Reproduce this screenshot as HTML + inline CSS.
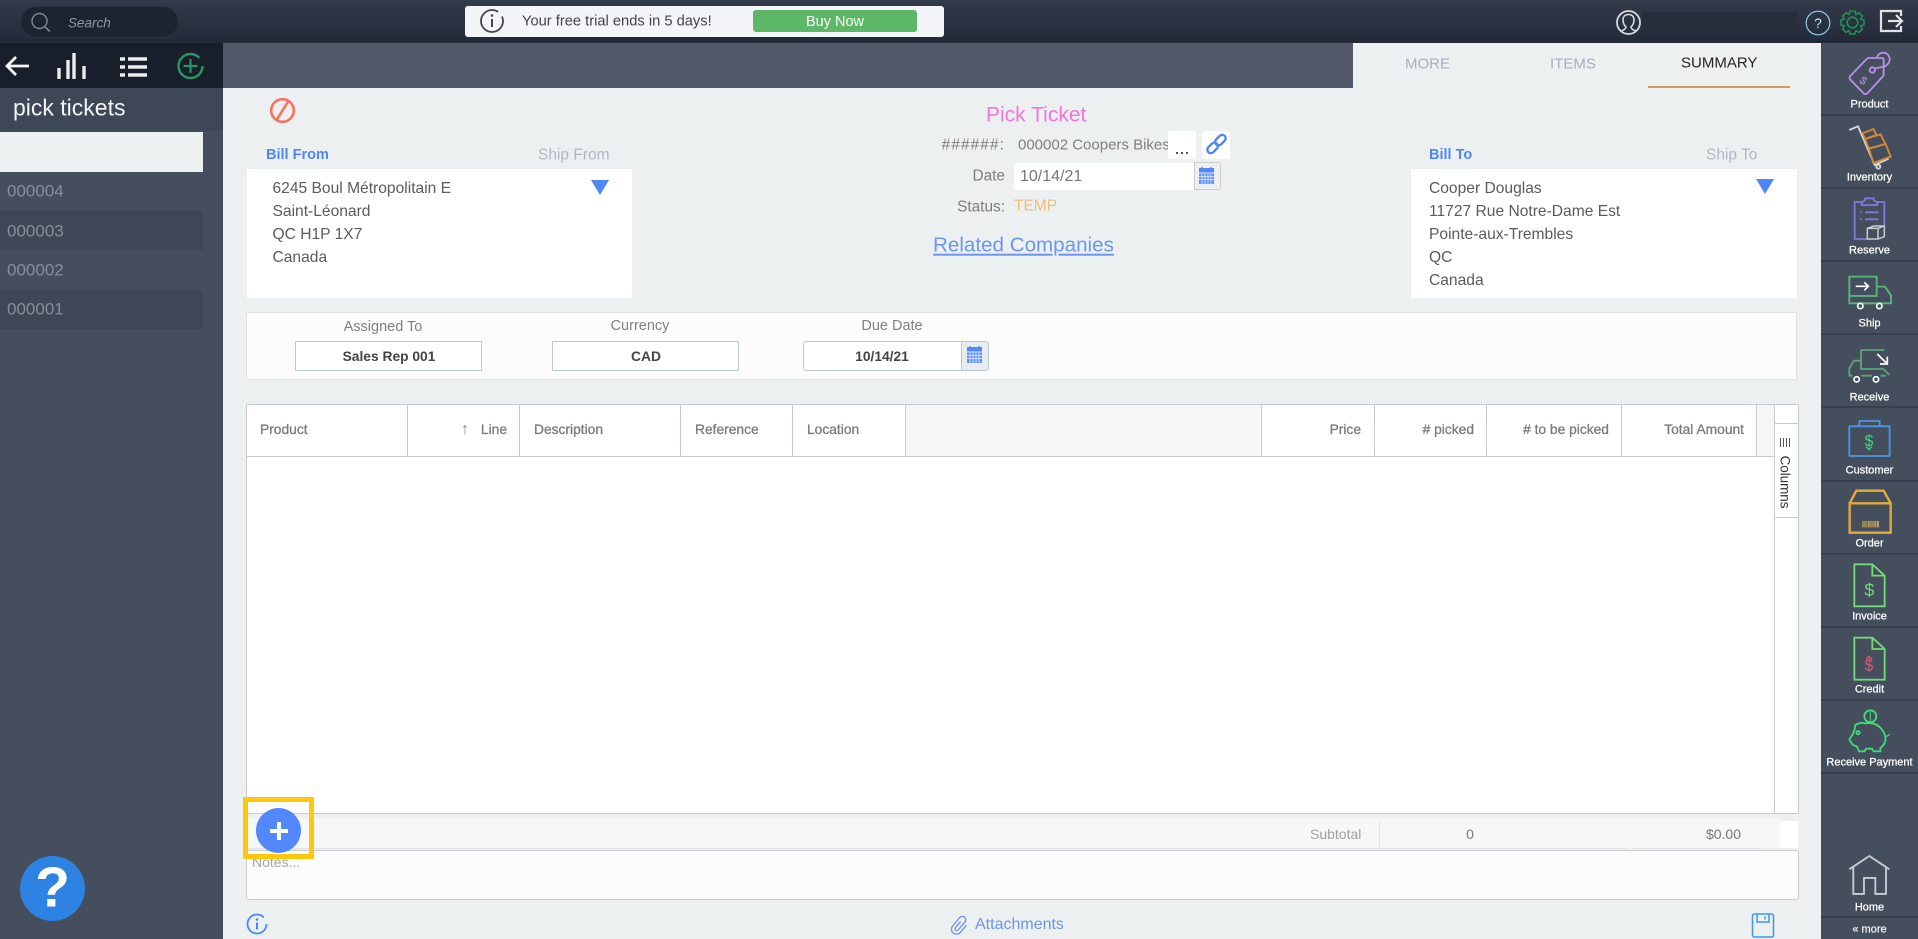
<!DOCTYPE html>
<html><head><meta charset="utf-8"><title>Pick Tickets</title>
<style>
html,body{margin:0;padding:0;width:1918px;height:939px;overflow:hidden;background:#edf0f1;font-family:"Liberation Sans",sans-serif}
.b{position:absolute}
.t{position:absolute;white-space:nowrap;line-height:1;transform:translateY(-50%)}
.c{position:absolute;white-space:nowrap;line-height:1;transform:translate(-50%,-50%)}
.r{position:absolute;white-space:nowrap;line-height:1;transform:translate(-100%,-50%)}
.addr{font-size:15.6px;color:#5b5b5b}
.lab{font-size:15.4px;color:#7d7d7d}
.th{font-size:13.8px;color:#7a7a7a;-webkit-text-stroke:.3px #7a7a7a}
.v{position:absolute;width:1px;background:#c6cbcf;top:405px;height:51px}
.side{font-size:11px;color:#fff;-webkit-text-stroke:.25px #fff}
.bx{position:absolute;box-sizing:border-box;background:#fff;border:1px solid #bcc8d0;top:341px;height:30px}
.bt{font-size:13.8px;color:#444;font-weight:bold}
.dv{position:absolute;left:1821px;width:97px;height:2px;background:#373f4c}
</style></head><body>

<div class="b" style="left:0;top:0;width:1918px;height:43px;background:linear-gradient(#333a4a,#222937)"></div>
<div class="b" style="left:20px;top:6px;width:159px;height:32px;box-sizing:border-box;border-radius:16px;background:#1c2432;border:1px solid #2c3442"></div>
<span class="t" style="left:68px;top:23px;font-size:13.5px;font-style:italic;color:#8d96a3">Search</span>

<div class="b" style="left:465px;top:6px;width:479px;height:31px;background:#f3f5f9;border-radius:3px"></div>
<span class="t" style="left:522px;top:22px;font-size:14.7px;color:#444">Your free trial ends in 5 days!</span>
<div class="b" style="left:753px;top:10px;width:164px;height:22px;background:#5cb767;border-radius:3px"></div>
<span class="c" style="left:835px;top:22px;font-size:14.5px;color:#fff">Buy Now</span>
<div class="b" style="left:1642px;top:12px;width:155px;height:22px;background:#262d3b"></div>

<div class="b" style="left:223px;top:43px;width:1130px;height:45px;background:#525868"></div>
<div class="b" style="left:0;top:43px;width:223px;height:896px;background:#454e5c"></div>
<div class="b" style="left:0;top:43px;width:223px;height:45px;background:#181f2b"></div>
<div class="b" style="left:0;top:88px;width:223px;height:43px;background:#3e4755"></div>
<span class="t" style="left:13px;top:108px;font-size:23px;color:#f2f4f5">pick tickets</span>
<div class="b" style="left:0;top:132px;width:203px;height:40px;background:#edf0f1"></div>
<div class="b" style="left:0;top:211px;width:203px;height:39px;background:#3e4755"></div>
<div class="b" style="left:0;top:290px;width:203px;height:39px;background:#3e4755"></div>
<span class="t" style="left:7px;top:191px;font-size:17px;color:#868e9a">000004</span>
<span class="t" style="left:7px;top:231px;font-size:17px;color:#868e9a">000003</span>
<span class="t" style="left:7px;top:270px;font-size:17px;color:#868e9a">000002</span>
<span class="t" style="left:7px;top:309px;font-size:17px;color:#868e9a">000001</span>

<div class="b" style="left:20px;top:856px;width:65px;height:65px;border-radius:50%;background:#2d82e2"></div>
<span class="c" style="left:52.5px;top:888px;font-size:57px;font-weight:bold;color:#fff">?</span>

<!-- tabs -->
<span class="t" style="left:1405px;top:64px;font-size:15px;color:#a7afc0">MORE</span>
<span class="t" style="left:1550px;top:64px;font-size:15px;color:#a7afc0">ITEMS</span>
<span class="t" style="left:1681px;top:63px;font-size:15px;color:#222">SUMMARY</span>
<div class="b" style="left:1648px;top:86px;width:142px;height:2px;background:#d39b57"></div>

<!-- bill from -->
<span class="t" style="left:266px;top:155px;font-size:14.5px;font-weight:bold;color:#4f86fb">Bill From</span>
<span class="t" style="left:538px;top:155px;font-size:15.5px;color:#b0b6c6">Ship From</span>
<div class="b" style="left:247px;top:169px;width:385px;height:129px;background:#fff"></div>
<span class="t addr" style="left:272.5px;top:188.500px">6245 Boul Métropolitain E</span>
<span class="t addr" style="left:272.5px;top:211.500px">Saint-Léonard</span>
<span class="t addr" style="left:272.5px;top:234.500px">QC H1P 1X7</span>
<span class="t addr" style="left:272.5px;top:257.500px">Canada</span>

<!-- middle -->
<span class="t" style="left:986px;top:115px;font-size:21px;color:#f075dc">Pick Ticket</span>
<span class="r lab" style="left:1005px;top:145px;letter-spacing:1.1px">######:</span>
<div class="b" style="left:1018px;top:134px;width:150px;height:24px;overflow:hidden"><span class="t" style="left:0;top:11px;font-size:15px;color:#808080">000002 Coopers Bikes</span></div>
<div class="b" style="left:1168px;top:131px;width:28px;height:28px;background:#fff;border-radius:3px"></div>
<span class="c" style="left:1182px;top:148px;font-size:18px;color:#333">...</span>
<div class="b" style="left:1202px;top:131px;width:28px;height:28px;background:#fff;border-radius:3px"></div>
<span class="r lab" style="left:1005px;top:176px">Date</span>
<div class="b" style="left:1014px;top:163px;width:180px;height:27px;background:#fff;border-radius:3px 0 0 3px"></div>
<span class="t" style="left:1020px;top:177px;font-size:16px;color:#777">10/14/21</span>
<div class="b" style="left:1194px;top:162px;width:27px;height:28px;box-sizing:border-box;background:#eceff1;border:1px solid #ccc;border-radius:0 3px 3px 0"></div>
<span class="r lab" style="left:1005px;top:207px">Status:</span>
<span class="t" style="left:1014px;top:206px;font-size:15.5px;color:#eabf7b">TEMP</span>
<span class="t" style="left:933px;top:246px;font-size:20.6px;color:#6d96ee;text-decoration:underline">Related Companies</span>

<!-- bill to -->
<span class="t" style="left:1429px;top:155px;font-size:14.5px;font-weight:bold;color:#4f86fb">Bill To</span>
<span class="t" style="left:1706px;top:155px;font-size:15.5px;color:#b0b6c6">Ship To</span>
<div class="b" style="left:1411px;top:169px;width:386px;height:129px;background:#fff"></div>
<span class="t addr" style="left:1429px;top:188.500px">Cooper Douglas</span>
<span class="t addr" style="left:1429px;top:211.500px">11727 Rue Notre-Dame Est</span>
<span class="t addr" style="left:1429px;top:234.500px">Pointe-aux-Trembles</span>
<span class="t addr" style="left:1429px;top:257.500px">QC</span>
<span class="t addr" style="left:1429px;top:280.500px">Canada</span>

<!-- assign panel -->
<div class="b" style="left:246px;top:312px;width:1551px;height:68px;box-sizing:border-box;background:#fcfcfc;border:1px solid #dde1e5;border-radius:2px"></div>
<span class="c" style="left:383px;top:327px;font-size:14.5px;color:#808080">Assigned To</span>
<span class="c" style="left:640px;top:326px;font-size:14.5px;color:#808080">Currency</span>
<span class="c" style="left:892px;top:326px;font-size:14.5px;color:#808080">Due Date</span>
<div class="bx" style="left:295px;width:187px"></div>
<span class="c bt" style="left:389px;top:357px">Sales Rep 001</span>
<div class="bx" style="left:552px;width:187px"></div>
<span class="c bt" style="left:646px;top:357px">CAD</span>
<div class="bx" style="left:803px;width:159px;border-radius:3px 0 0 3px"></div>
<span class="c bt" style="left:882px;top:357px">10/14/21</span>
<div class="bx" style="left:961px;width:28px;background:#e9ecef;border-radius:0 3px 3px 0"></div>

<!-- table -->
<div class="b" style="left:246px;top:404px;width:1553px;height:410px;box-sizing:border-box;background:#fff;border:1px solid #c6cbcf;border-radius:2px"></div>
<div class="b" style="left:905px;top:405px;width:356px;height:51px;background:#f5f7f7"></div>
<div class="b" style="left:1756px;top:405px;width:18px;height:51px;background:#f5f7f7"></div>
<div class="b" style="left:247px;top:456px;width:1527px;height:1px;background:#c6cbcf"></div>
<div class="v" style="left:407px"></div><div class="v" style="left:519px"></div><div class="v" style="left:680px"></div><div class="v" style="left:792px"></div><div class="v" style="left:905px"></div><div class="v" style="left:1261px"></div><div class="v" style="left:1374px"></div><div class="v" style="left:1486px"></div><div class="v" style="left:1621px"></div><div class="v" style="left:1756px"></div>
<div class="b" style="left:1774px;top:405px;width:1px;height:408px;background:#c6cbcf"></div>
<div class="b" style="left:1774px;top:423px;width:24px;height:1px;background:#c6cbcf"></div>
<div class="b" style="left:1774px;top:517px;width:24px;height:1px;background:#c6cbcf"></div>
<span class="t th" style="left:260px;top:430px">Product</span>
<span class="t" style="left:461px;top:430px;font-size:16px;color:#888">↑</span>
<span class="r th" style="left:507px;top:430px">Line</span>
<span class="t th" style="left:534px;top:430px">Description</span>
<span class="t th" style="left:695px;top:430px">Reference</span>
<span class="t th" style="left:807px;top:430px">Location</span>
<span class="r th" style="left:1361px;top:430px">Price</span>
<span class="r th" style="left:1474px;top:430px"># picked</span>
<span class="r th" style="left:1609px;top:430px"># to be picked</span>
<span class="r th" style="left:1744px;top:430px">Total Amount</span>
<span class="c" style="left:1785px;top:482px;font-size:13.4px;color:#333;transform:translate(-50%,-50%) rotate(90deg)">Columns</span>
<div class="b" style="left:1780px;top:438px;width:12px;height:9px;background:repeating-linear-gradient(90deg,#555 0 1px,transparent 1px 3px)"></div>

<!-- footer -->
<div class="b" style="left:246px;top:818px;width:1534px;height:30px;background:#f6f7f9"></div>
<div class="b" style="left:1780px;top:821px;width:18px;height:27px;background:#fff"></div>
<div class="b" style="left:246px;top:848px;width:1133px;height:1px;background:#dfe2e6"></div>
<div class="b" style="left:1379px;top:822px;width:1px;height:26px;background:#dfe2e6"></div>
<div class="b" style="left:1379px;top:848px;width:248px;height:1px;background:#dfe2e6"></div>
<div class="b" style="left:1633px;top:848px;width:126px;height:1px;background:#dfe2e6"></div>
<span class="t" style="left:1310px;top:834px;font-size:14px;color:#a0a0a0">Subtotal</span>
<span class="c" style="left:1470px;top:834px;font-size:14px;color:#777">0</span>
<span class="r" style="left:1741px;top:834px;font-size:14px;color:#777">$0.00</span>
<div class="b" style="left:246px;top:850px;width:1553px;height:50px;box-sizing:border-box;background:#fcfcfc;border:1px solid #ccc;border-radius:3px"></div>
<span class="t" style="left:252px;top:862px;font-size:14px;color:#a5a5a5">Notes...</span>
<span class="t" style="left:975px;top:925px;font-size:16px;color:#6b95f0">Attachments</span>

<!-- highlight -->
<div class="b" style="left:243px;top:797px;width:71px;height:62px;box-sizing:border-box;border:5px solid #fdc70c"></div>
<div class="b" style="left:256px;top:808px;width:45px;height:45px;border-radius:50%;background:#5288fb"></div>
<div class="b" style="left:269.5px;top:828.500px;width:18px;height:4px;background:#fff"></div>
<div class="b" style="left:276.500px;top:821.5px;width:4px;height:18px;background:#fff"></div>

<!-- right sidebar -->
<div class="b" style="left:1821px;top:43px;width:97px;height:896px;background:#454e5c"></div>
<div class="dv" style="top:114px"></div><div class="dv" style="top:187px"></div><div class="dv" style="top:260px"></div><div class="dv" style="top:333px"></div><div class="dv" style="top:406px"></div><div class="dv" style="top:480px"></div><div class="dv" style="top:553px"></div><div class="dv" style="top:626px"></div><div class="dv" style="top:699px"></div><div class="dv" style="top:772px"></div><div class="dv" style="top:916px"></div>
<span class="c side" style="left:1869.5px;top:105px">Product</span>
<span class="c side" style="left:1869.5px;top:178px">Inventory</span>
<span class="c side" style="left:1869.5px;top:251px">Reserve</span>
<span class="c side" style="left:1869.5px;top:324px">Ship</span>
<span class="c side" style="left:1869.5px;top:398px">Receive</span>
<span class="c side" style="left:1869.5px;top:471px">Customer</span>
<span class="c side" style="left:1869.5px;top:544px">Order</span>
<span class="c side" style="left:1869.5px;top:617px">Invoice</span>
<span class="c side" style="left:1869.5px;top:690px">Credit</span>
<span class="c side" style="left:1869.5px;top:763px">Receive Payment</span>
<span class="c side" style="left:1869.5px;top:908px">Home</span>
<span class="c side" style="left:1869.5px;top:930px;color:#e8e8e8">« more</span>

<svg class="b" style="left:0;top:0" width="1918" height="939" viewBox="0 0 1918 939" fill="none">
<!-- search -->
<circle cx="39.5" cy="21" r="7.5" stroke="#7e8795" stroke-width="1.4"/><path d="M45 27l5 4.500" stroke="#7e8795" stroke-width="1.6"/>
<!-- banner info -->
<circle cx="492" cy="21" r="11" stroke="#444" stroke-width="1.8" stroke-dasharray="58 6"/><circle cx="492" cy="15.5" r="1.3" fill="#444"/><path d="M492 19v8" stroke="#444" stroke-width="2"/>
<!-- top right -->
<circle cx="1628.5" cy="22.5" r="11.5" stroke="#d8dadd" stroke-width="1.8"/>
<path d="M1621 31c3-1 5-2 5-4-2-2-3-5-3-7 0-3.5 2.300-5.500 5.500-5.500s5.500 2 5.500 5.500c0 2-1 5-3 7 0 2 2 3 5 4" stroke="#d8dadd" stroke-width="1.6"/>
<circle cx="1818" cy="23" r="11.800" stroke="#8fcdf0" stroke-width="1.200"/>
<text x="1818" y="28" text-anchor="middle" font-size="14" font-family="Liberation Sans" fill="#cfe4f2">?</text>
<g transform="translate(1852.500,22.500)" stroke="#1d9350" stroke-width="1.600"><circle r="5.300"/><path d="M-2.400-11.500H2.400L3.400-8.100 6.430-9.830 9.830-6.430 8.100-3.400 11.500-2.400V2.400L8.100 3.400 9.830 6.430 6.430 9.830 3.400 8.100 2.400 11.500H-2.400L-3.400 8.100-6.430 9.830-9.830 6.430-8.100 3.400-11.500 2.400V-2.400L-8.100-3.400-9.830-6.430-6.430-9.830-3.400-8.100z"/></g>
<path d="M1901 16v-5h-20v20h20v-5" stroke="#dfe1e3" stroke-width="2.200"/><path d="M1888 21h13M1896 15l6 6-6 6" stroke="#dfe1e3" stroke-width="2.200"/>
<!-- left bar icons -->
<path d="M29 66H7M16 57l-9 9 9 9" stroke="#f4f4f4" stroke-width="2.800"/>
<path d="M59 68v11M68 60v19M74 53v26M84 66v13" stroke="#ececec" stroke-width="3.400"/>
<path d="M120 59h5M120 67h5M120 75h5M128 59h19M128 67h19M128 75h19" stroke="#ececec" stroke-width="3.400"/>
<circle cx="190.500" cy="66" r="12" stroke="#2a9463" stroke-width="2.400" stroke-dasharray="66 9"/><path d="M190.500 59v14M183.500 66h14" stroke="#2a9463" stroke-width="2.200"/>
<!-- prohibit -->
<circle cx="282.500" cy="110.500" r="11.300" stroke="#f9705f" stroke-width="2.600"/><path d="M276 121l13-21" stroke="#f9705f" stroke-width="2.600"/>
<!-- triangles -->
<path d="M591 180h18l-9 15z" fill="#4f86fb"/><path d="M1756 179h18l-9 15z" fill="#4f86fb"/>
<!-- link icon -->
<g stroke="#4a83fb" stroke-width="2.300"><rect x="-9.500" y="-3.500" width="12" height="7" rx="3.500" transform="translate(1216.500,144) rotate(-45) translate(-2,0)"/><rect x="-2.500" y="-3.500" width="12" height="7" rx="3.500" transform="translate(1216.500,144) rotate(-45) translate(2,0)"/></g>
<!-- calendars -->
<g id="cal"><rect x="1199" y="168" width="15" height="4.500" fill="#5288fb"/><path d="M1202 167v2M1211 167v2" stroke="#5288fb" stroke-width="1.500"/><rect x="1199" y="173.500" width="15" height="10.500" fill="#5f92fb"/><path d="M1199 176.500h15M1199 179.500h15M1202 174v10M1205 174v10M1208 174v10M1211 174v10" stroke="#e4ecfd" stroke-width=".8"/></g>
<use href="#cal" transform="translate(-232,179)"/>
<!-- save & info & clip -->
<circle cx="257" cy="924" r="9.500" stroke="#4a88fb" stroke-width="1.800" stroke-dasharray="52 8"/><circle cx="257" cy="919.500" r="1.300" fill="#4a88fb"/><path d="M257 922.500v7" stroke="#4a88fb" stroke-width="2"/>
<path d="M1752.500 916a2 2 0 0 1 2-2h17a2 2 0 0 1 2 2v19a2 2 0 0 1-2 2h-17a2 2 0 0 1-2-2z" stroke="#3d97e6" stroke-width="1.500"/><path d="M1757 914v8h12v-8" stroke="#3d97e6" stroke-width="1.500"/><path d="M1765 916.500v3" stroke="#3d97e6" stroke-width="1.500"/>
<path d="M-1.800-3V5a1.800 1.800 0 0 0 3.600 0V-5.500a3.400 3.400 0 0 0-6.800 0V5.500a5 5 0 0 0 10 0V-4" stroke="#6b95f0" stroke-width="1.300" transform="translate(960,925) rotate(40)"/>

<!-- sidebar upper icons, zoom coords -->
<g transform="translate(1790,40) scale(.3333)" stroke-width="5.500">
<g stroke="#b88fe6"><path d="M236 54h40q5 0 5 5v44q0 4-3 7l-46 50q-6 5-11 0l-40-41q-5-6 0-11l48-50q3-4 7-4z"/><circle cx="247" cy="90" r="8"/><path d="M254 86c10-4 22-3 32-8 14-8 18-24 6-36-12-8-28-3-32 12"/></g>
<text x="220" y="133" font-size="34" text-anchor="middle" fill="#b88fe6" font-family="Liberation Sans" transform="rotate(40 220 122)">$</text>
<g stroke="#d5d8dd"><path d="M178 270l26-11 50 116 42-19"/><circle cx="265" cy="380" r="6"/></g>
<g stroke="#d48a33"><path d="M237 326l50-14 15 38-52 19z"/><path d="M225 297l47-14 14 29-49 14z"/><path d="M218 280l33-13 8 18-34 12z"/></g>
<g stroke="#8277e0"><path d="M215 486h-21v111h38M262 486h21v72"/><path d="M215 495v-9q9-1 11-11h24q2 10 12 11v9z"/><path d="M225 517h40M225 538h40M210 517h5M210 538h5"/></g>
<path d="M232 565l20-7h31v32l-19 7h-32zM232 565h32v32M264 565l19-7" stroke="#c9ccd1" stroke-width="4.500"/>
<g stroke="#5cb67c"><rect x="178" y="710" width="82" height="58"/><path d="M260 740h25l18 26v24h-125v-22"/><path d="M224 790h20"/></g>
<g stroke="#fff" stroke-width="5"><path d="M197 739h38M223 727l12 12-12 12"/><circle cx="211" cy="798" r="8"/><circle cx="268" cy="798" r="8"/></g>
</g>
<!-- sidebar middle icons -->
<g transform="translate(1790,340) scale(.3333)" stroke-width="5.500">
<g stroke="#5aa673"><path d="M213 30h70M213 30v57h67l18 18"/><path d="M213 62h-21l-14 23v22h10M214 107h32M272 107h16"/></g>
<g stroke="#fff" stroke-width="5"><path d="M262 42l30 30M292 50v22h-22"/><circle cx="200" cy="118" r="8"/><circle cx="258" cy="118" r="8"/></g>
<g stroke="#4d94e2"><rect x="178" y="259" width="121" height="89" rx="2"/><path d="M208 258v-15h61v15"/></g>
<text x="237" y="318" font-size="48" text-anchor="middle" fill="#3fd27a" font-family="Liberation Sans">$</text>
<path d="M228 320l9 9 9-9" stroke="#3fd27a" stroke-width="4"/>
<g stroke="#e4ad3a" stroke-width="7"><path d="M179 490h123v88h-123zM179 490l20-38h82l21 38"/></g>
<path d="M217 543h50v19h-50z" fill="#c09b56"/>
<path d="M222 543v19M228 543v19M233 543v19M240 543v19M246 543v19M252 543v19M259 543v19" stroke="#454e5c" stroke-width="2"/>
<g stroke="#75d879"><path d="M193 673h54l37 34v92h-91z"/><path d="M247 673v34h37"/></g>
<text x="238" y="768" font-size="54" text-anchor="middle" fill="#6fd77b" font-family="Liberation Sans">$</text>
</g>
<!-- sidebar lower icons -->
<g transform="translate(1790,640) scale(.3333)" stroke-width="5.500">
<g stroke="#75d879"><path d="M193-7h54l37 34v92h-91z"/><path d="M247-7v34h37"/></g>
<text x="237" y="92" font-size="46" text-anchor="middle" fill="#e4566f" font-family="Liberation Sans">$</text>
<path d="M229 58l8-9 8 9" stroke="#e4566f" stroke-width="4"/>
<g stroke="#3fd977"><circle cx="241" cy="229" r="18"/><path d="M241 214v30" stroke-width="3"/><path d="M185 288q10-15 10-32 14-10 30-6 44-6 60 36 6 24-14 38v10h-20l-5-8h-18l-4 8h-17l-6-14q-16-4-23-22z"/><circle cx="204" cy="278" r="5"/><path d="M288 290l12-7" stroke-width="4"/></g>
<path d="M178 688l60-40 60 40M190 680v82h32v-48h34v48h32v-82" stroke="#c8ccd2"/>
</g>
</svg>
</body></html>
